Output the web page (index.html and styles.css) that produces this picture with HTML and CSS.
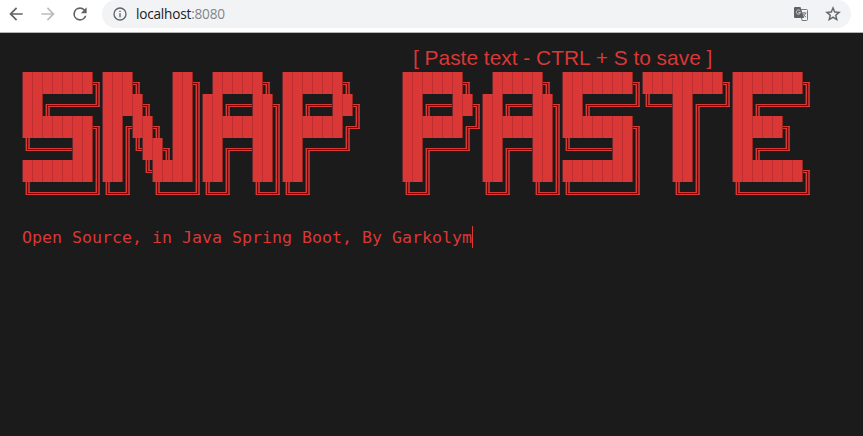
FILE: index.html
```html
<!DOCTYPE html>
<html lang="en">
<head>
<meta charset="utf-8">
<title>localhost:8080</title>
<link rel="stylesheet" href="styles.css">
</head>
<body>
<header class="toolbar">
  <nav class="nav">
    <svg class="icon" viewBox="0 0 24 24"><path fill="#5f6368" d="M20 11H7.830l5.590-5.590L12 4l-8 8 8 8 1.410-1.410L7.830 13H20v-2z"/></svg>
    <svg class="icon" viewBox="0 0 24 24"><path fill="#babcbe" d="M12 4l-1.410 1.410L16.170 11H4v2h12.170l-5.580 5.590L12 20l8-8z"/></svg>
    <svg class="icon" viewBox="0 0 24 24"><path fill="#5f6368" d="M17.650 6.350A7.960 7.960 0 0 0 12 4a8 8 0 1 0 7.730 10h-2.080A6 6 0 1 1 12 6c1.660 0 3.140.69 4.220 1.780L13 11h7V4l-2.350 2.350z"/></svg>
  </nav>
  <div class="omnibox">
    <svg class="info" viewBox="0 0 24 24"><path fill="#5f6368" d="M11 17h2v-6h-2v6zm1-15a10 10 0 1 0 0 20 10 10 0 0 0 0-20zm0 18a8 8 0 1 1 0-16 8 8 0 0 1 0 16zM11 9h2V7h-2v2z"/></svg>
    <span class="url">localhost<span class="port">:8080</span></span>
    <svg class="translate" viewBox="0 0 16 16">
      <path fill="#f1f3f4" stroke="#777b7f" d="M7 3.500h6.500q1 0 1 1v9q0 1-1 1H9z"/>
      <path fill="#5f6368" d="M2 1h5.500L11 12H2q-1 0-1-1V2q0-1 1-1z"/>
      <path fill="none" stroke="#d5d7d9" d="M7.200 4.900A2.100 2.100 0 1 0 7.500 6.500H5.500"/>
      <path fill="none" stroke="#777b7f" d="M9 7h4.500M11 6v1M12.500 7q-.5 2.500-2.500 4M10 8q1 2 3 3"/>
    </svg>
    <svg class="star" viewBox="0 0 24 24"><path fill="#5f6368" stroke="#5f6368" stroke-width=".4" d="M22 9.240l-7.190-.62L12 2 9.190 8.630 2 9.240l5.460 4.730L5.820 21 12 17.270 18.180 21l-1.630-7.030L22 9.240zM12 15.400l-3.760 2.270 1-4.280-3.320-2.880 4.380-.38L12 6.100l1.710 4.040 4.380.38-3.320 2.880 1 4.280L12 15.400z"/></svg>
  </div>
</header>
<main class="page">
  <p class="hint">[ Paste text - CTRL + S to save ]</p>
  <svg class="banner" id="banner" role="img" aria-label="SNAP PASTE" viewBox="0 0 792 132" shape-rendering="crispEdges"></svg>
  <p class="credit"><span class="typed">Open Source, in Java Spring Boot, By Garkolym</span></p>
</main>
<script src="banner.js"></script>
</body>
</html>
```
FILE: styles.css
```css
* { box-sizing: border-box; }
body { margin: 0; background: #1b1b1b; color: #da3737; overflow: hidden; }
p { margin: 0; white-space: pre; }
svg { display: block; flex: none; }

.toolbar { display: flex; height: 33px; padding-left: 6px; background: #fff; border-bottom: 1px solid #b5b5b5; }
.nav { display: flex; gap: 12px; height: 28px; align-items: center; }
.icon { width: 20px; height: 20px; }
.omnibox { display: flex; align-items: center; width: 749px; height: 28px; margin-left: 12px; padding: 0 9px 0 10px; background: #f1f3f4; border-radius: 14px; }
.info { width: 16px; height: 16px; }
.url { margin-left: 8px; font: 13.6px/20px "Open Sans", sans-serif; letter-spacing: -.2px; color: #202124; }
.port { color: #80868b; }
.translate { width: 16px; height: 16px; margin-left: auto; }
.star { width: 18px; height: 18px; margin-left: 15px; }

.page { height: 403px; padding: 13px 22px 0; }
.hint { height: 26px; margin-left: 391px; font: 20.9px/24px "Liberation Sans", Arial, sans-serif; }
.banner { width: 792px; height: 132px; }
.credit { display: flex; margin-top: 22px; height: 22px; font: 16.61px/24px "DejaVu Sans Mono", monospace; }
.typed { height: 22px; border-right: 1px solid #da3737; }

.block { fill: #da3737; }
.seam { fill: #be2d30; }
.edge-left { fill: #66282c; }
.edge-right { fill: #98261f; }
.line { fill: #da3737; }
.shade { fill: #4a1010; }
.soft { fill: #b03030; }
```
FILE: banner.js
```js
const rows = [
  "███████╗███╗   ██╗ █████╗ ██████╗     ██████╗  █████╗ ███████╗████████╗███████╗",
  "██╔════╝████╗  ██║██╔══██╗██╔══██╗    ██╔══██╗██╔══██╗██╔════╝╚══██╔══╝██╔════╝",
  "███████╗██╔██╗ ██║███████║██████╔╝    ██████╔╝███████║███████╗   ██║   █████╗  ",
  "╚════██║██║╚██╗██║██╔══██║██╔═══╝     ██╔═══╝ ██╔══██║╚════██║   ██║   ██╔══╝  ",
  "███████║██║ ╚████║██║  ██║██║         ██║     ██║  ██║███████║   ██║   ███████╗",
  "╚══════╝╚═╝  ╚═══╝╚═╝  ╚═╝╚═╝         ╚═╝     ╚═╝  ╚═╝╚══════╝   ╚═╝   ╚══════╝"
];
const W = 10, H = 22;
const svg = document.getElementById("banner");

function rect(cls, x, y, w, h) {
  const r = document.createElementNS("http://www.w3.org/2000/svg", "rect");
  r.setAttribute("class", cls);
  r.setAttribute("x", x);
  r.setAttribute("y", y);
  r.setAttribute("width", w);
  r.setAttribute("height", h);
  svg.appendChild(r);
}

// A double vertical stroke: two rails with a dark groove between them.
function rails(x, y, outerTop, innerTop, bottomOuter, bottomInner, leftOuter) {
  const a = leftOuter ? [outerTop, bottomOuter] : [innerTop, bottomInner];
  const b = leftOuter ? [innerTop, bottomInner] : [outerTop, bottomOuter];
  rect("edge-left", x + 3, y + a[0], 1, a[1] - a[0]);
  rect("line", x + 4, y + a[0], 1, a[1] - a[0]);
  rect("shade", x + 5, y + Math.max(a[0], b[0]), 1, Math.min(a[1], b[1]) - Math.max(a[0], b[0]));
  rect("soft", x + 6, y + b[0], 2, b[1] - b[0]);
}

function bars(x, y, x1, x2, x3, x4) {
  rect("shade", x + Math.max(x1, x3), y + 11, Math.min(x2, x4) - Math.max(x1, x3), 1);
  rect("line", x + x1, y + 10, x2 - x1, 1);
  rect("line", x + x3, y + 12, x4 - x3, 1);
}

rows.forEach((row, j) => [...row].forEach((c, i) => {
  const x = i * W, y = j * H;
  if (c === "═") bars(x, y, 0, 11, 0, 11);
  if (c === "║") rails(x, y, 0, 0, H, H, true);
  if (c === "╗") { rails(x, y, 10, 12, H, H, false); bars(x, y, 0, 8, 0, 5); }
  if (c === "╔") { rails(x, y, 10, 12, H, H, true); bars(x, y, 4, 11, 6, 11); }
  if (c === "╝") { rails(x, y, 0, 0, 13, 11, false); bars(x, y, 0, 5, 0, 8); }
  if (c === "╚") { rails(x, y, 0, 0, 13, 11, true); bars(x, y, 6, 11, 4, 11); }
}));

rows.forEach((row, j) => [...row].forEach((c, i) => {
  if (c !== "█") return;
  const x = i * W, y = j * H;
  rect(row[i - 1] === "█" ? "seam" : "edge-left", x, y, 1, H);
  rect("block", x + 1, y, 9, H);
  if (row[i + 1] !== "█") rect("edge-right", x + W, y, 1, H);
}));
```
